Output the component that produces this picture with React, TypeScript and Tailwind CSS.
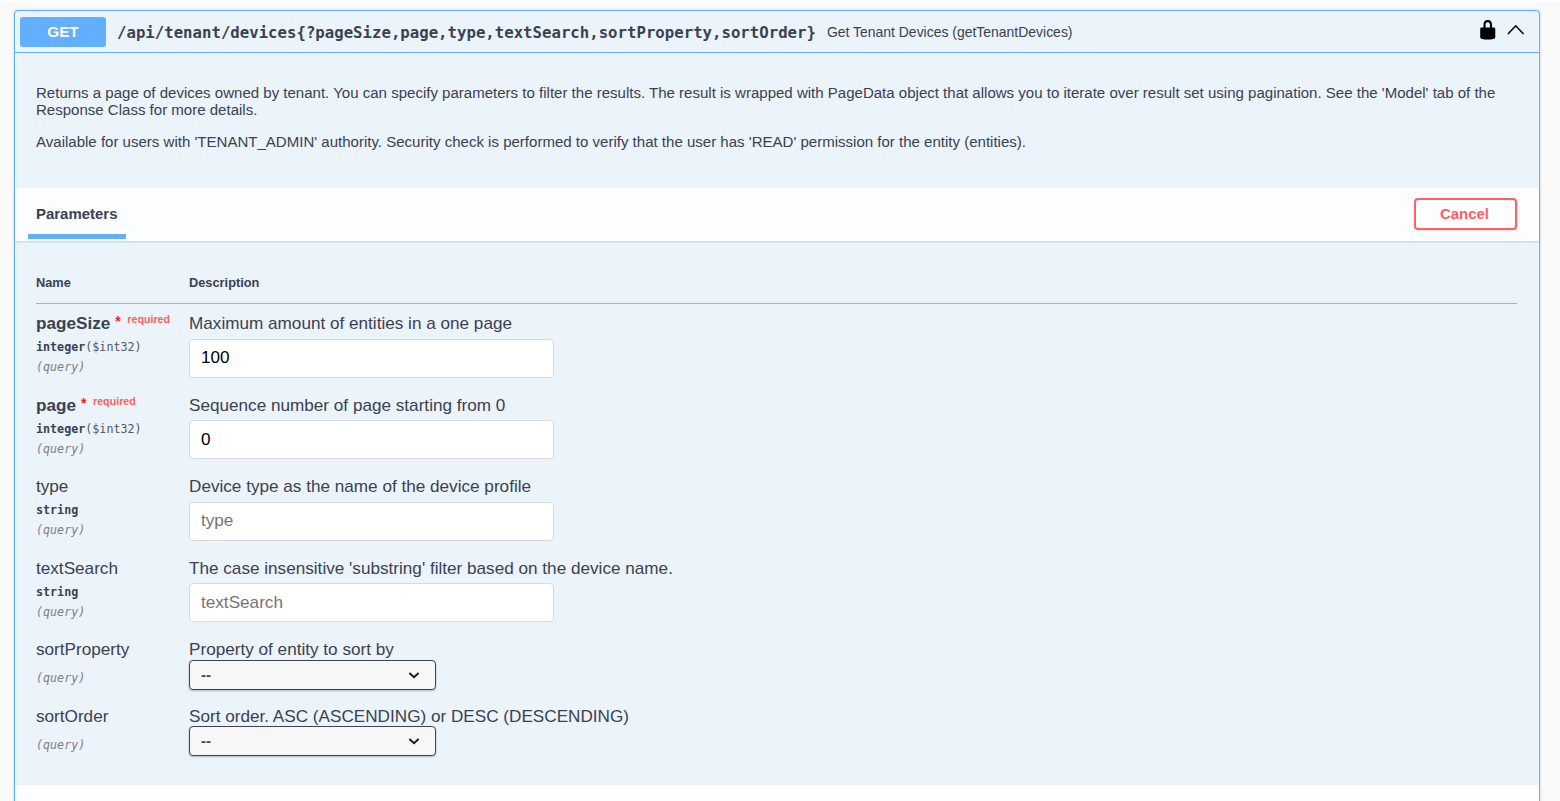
import type { ReactNode } from "react";

type Param = {
  name: string;
  description: string;
  type?: string;
  format?: string;
  required?: boolean;
  value?: string;
  options?: boolean;
};

const params: Param[] = [
  { name: "pageSize", description: "Maximum amount of entities in a one page", type: "integer", format: "($int32)", required: true, value: "100" },
  { name: "page", description: "Sequence number of page starting from 0", type: "integer", format: "($int32)", required: true, value: "0" },
  { name: "type", description: "Device type as the name of the device profile", type: "string" },
  { name: "textSearch", description: "The case insensitive 'substring' filter based on the device name.", type: "string" },
  { name: "sortProperty", description: "Property of entity to sort by", options: true },
  { name: "sortOrder", description: "Sort order. ASC (ASCENDING) or DESC (DESCENDING)", options: true },
];

function Mono({ className, children }: { className: string; children: ReactNode }) {
  return <div className={`font-['DejaVu_Sans_Mono',monospace] text-[11.7px] ${className}`}>{children}</div>;
}

function SelectBox() {
  return (
    <div className="mt-[0.5px] flex h-[30px] w-[247px] items-center justify-between rounded-[4px] border border-[#41444e] bg-[#f7f7f7] pl-[11px] pr-[15.5px] shadow-[0_1px_2px_rgba(0,0,0,0.25)]">
      <span className="pb-px text-[15px] font-bold leading-none text-[#3b4151]">--</span>
      <svg width="12" height="8" viewBox="0 0 12 8" fill="none">
        <path d="M1.4 1.9 6 6.2l4.6-4.3" stroke="#1c1c1c" strokeWidth="2" />
      </svg>
    </div>
  );
}

function ParamRow({ param }: { param: Param }) {
  return (
    <div className={`flex ${param.options ? "h-[66.5px]" : "h-[81.5px]"}`}>
      <div className="w-[153px] shrink-0">
        <div className={`flex h-5 items-center whitespace-nowrap text-[17.15px] leading-5 ${param.required ? "font-bold" : ""}`}>
          <span>{param.name}</span>
          {param.required && (
            <span className="flex pb-[6px] text-[10.7px] leading-none">
              <span className="ml-[5px] mr-[5px] w-[7px] pt-[2px] text-[14px] leading-[10px] text-[#ff1a1a]">*</span>
              <span className="text-[#ff6060]">required</span>
            </span>
          )}
        </div>
        {param.type ? (
          <Mono className="mt-[4px] font-bold leading-5">
            {param.type}
            <span className="font-normal text-[#55585f]">{param.format}</span>
          </Mono>
        ) : (
          <div className="h-[9px]" />
        )}
        <Mono className="italic leading-[21px] text-[#808080]">(query)</Mono>
      </div>
      <div>
        <div className="h-5 whitespace-nowrap text-[17.15px] leading-5">{param.description}</div>
        {param.options ? (
          <SelectBox />
        ) : (
          <input
            className="mt-[5.7px] block h-[39px] w-[365px] rounded-[4px] border border-[#d9d9d9] bg-white px-[11px] pb-px text-[17.15px] text-black outline-none placeholder:text-[#757575]"
            defaultValue={param.value}
            placeholder={param.name}
          />
        )}
      </div>
    </div>
  );
}

export default function App() {
  return (
    <div className="h-[801px] overflow-hidden border-t-2 border-white bg-[#fafafa] px-[14px] pt-2 pr-5 font-['Liberation_Sans',Arial,sans-serif] text-[#3b4151]">
      <div className="h-[860px] rounded-[4px] border border-[#61affe] bg-[#ebf3fb] shadow-[0_0_3px_rgba(0,0,0,0.19)]">
        <div className="flex h-[42px] items-center border-b border-[#61affe] pl-[5px] pr-3">
          <div className="flex h-[30px] w-[86px] items-center justify-center rounded-[3px] bg-[#61affe] pt-px text-[15.3px] font-bold text-white">
            GET
          </div>
          <span className="ml-[11px] whitespace-nowrap pt-[3px] font-['DejaVu_Sans_Mono',monospace] text-[15.69px] font-bold">
            {"/api/tenant/devices{?pageSize,page,type,textSearch,sortProperty,sortOrder}"}
          </span>
          <span className="ml-[11px] flex-1 whitespace-nowrap pt-[2px] text-[13.96px]">Get Tenant Devices (getTenantDevices)</span>
          <svg className="-mt-[4px]" width="21.5" height="21.5" viewBox="0 0 20 20" fill="#000">
            <path d="M15.8 8H14V5.6C14 2.703 12.665 1 10 1 7.334 1 6 2.703 6 5.6V8H4c-.553 0-1 .646-1 1.199V17c0 .549.428 1.139.951 1.307l1.197.387C5.672 18.861 6.55 19 7.1 19h5.8c.549 0 1.428-.139 1.951-.307l1.196-.387c.524-.167.953-.757.953-1.306V9.199C17 8.646 16.352 8 15.8 8zM12 8H8V5.199C8 3.754 8.797 3 10 3c1.203 0 2 .754 2 2.199V8z" />
          </svg>
          <svg className="-mt-[3px] ml-[6px] mr-px" width="21.5" height="21.5" viewBox="0 0 20 20" fill="#111">
            <path d="M17.418 14.908c-.272.281-.709.281-.979 0L10 8.209l-6.439 6.699c-.271.281-.708.281-.979 0-.27-.28-.27-.734 0-1.014l6.908-7.189c.271-.281.709-.281.979 0l6.908 7.189c.271.28.271.734.041 1.014z" transform="translate(0 -.8)" />
          </svg>
        </div>

        <div className="h-[134.5px] px-[21px] pt-[31px] text-[15.04px] leading-[17.25px]">
          <p className="whitespace-nowrap">
            Returns a page of devices owned by tenant. You can specify parameters to filter the results. The result is
            wrapped with PageData object that allows you to iterate over result set using pagination. See the 'Model' tab
            of the
            <br />
            Response Class for more details.
          </p>
          <p className="mt-[14.5px]">
            Available for users with 'TENANT_ADMIN' authority. Security check is performed to verify that the user has
            'READ' permission for the entity (entities).
          </p>
        </div>

        <div className="flex h-[53.5px] items-center justify-between bg-[#fcfdff] pl-[13px] pr-[22px] shadow-[0_1px_2px_rgba(0,0,0,0.15)]">
          <div className="flex h-full w-[98px] flex-col justify-end">
            <span className="pl-2 text-[14.96px] font-bold leading-[17px]">Parameters</span>
            <div className="mb-[2.5px] mt-[12px] h-[4.5px] bg-[#61affe]" />
          </div>
          <button className="h-[32px] w-[103px] rounded-[4px] border-2 border-[#ff6060] pr-[2px] text-[14.96px] font-bold leading-none text-[#ff6060] shadow-[0_1px_2px_rgba(0,0,0,0.1)]">
            Cancel
          </button>
        </div>

        <div className="h-[543.5px] pl-[21px] pr-[22px] pt-[32px]">
          <div className="flex h-[30.5px] border-b border-[#a8b2c2] text-[12.8px] font-bold leading-5">
            <div className="w-[153px]">Name</div>
            <div>Description</div>
          </div>
          <div className="pt-[9.8px]">
            {params.map((param) => (
              <ParamRow key={param.name} param={param} />
            ))}
          </div>
        </div>
        <div className="h-[53px] bg-[#fcfdff]" />
      </div>
    </div>
  );
}
